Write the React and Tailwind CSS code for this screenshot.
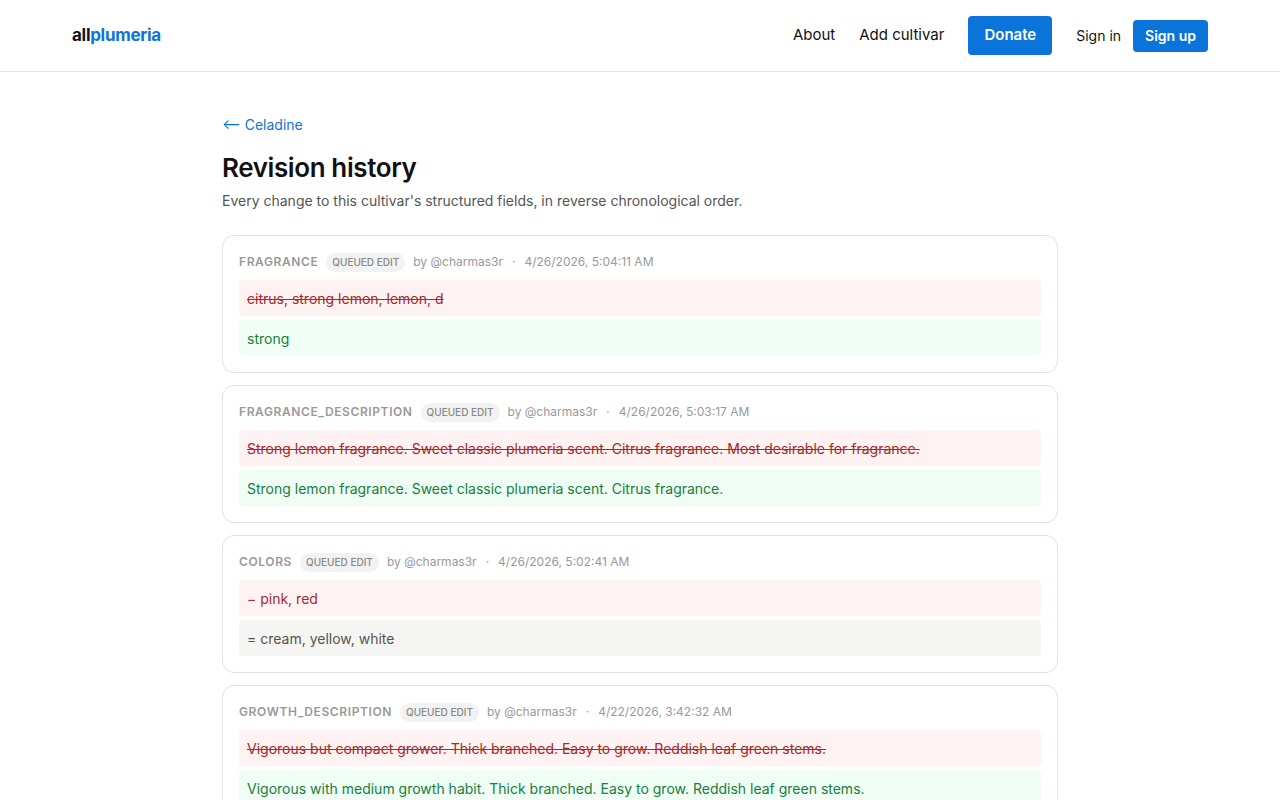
import React from "react";

const entries = [
  { field: "FRAGRANCE", date: "4/26/2026, 5:04:11 AM", rows: [["del", "citrus, strong lemon, lemon, d"], ["add", "strong"]] },
  { field: "FRAGRANCE_DESCRIPTION", date: "4/26/2026, 5:03:17 AM", rows: [["del", "Strong lemon fragrance. Sweet classic plumeria scent. Citrus fragrance. Most desirable for fragrance."], ["add", "Strong lemon fragrance. Sweet classic plumeria scent. Citrus fragrance."]] },
  { field: "COLORS", date: "4/26/2026, 5:02:41 AM", rows: [["minus", "− pink, red"], ["eq", "= cream, yellow, white"]] },
  { field: "GROWTH_DESCRIPTION", date: "4/22/2026, 3:42:32 AM", rows: [["del", "Vigorous but compact grower. Thick branched. Easy to grow. Reddish leaf green stems."], ["add", "Vigorous with medium growth habit. Thick branched. Easy to grow. Reddish leaf green stems."]] },
];

const rowCls = {
  del: "bg-[#fef2f2] text-[#a52a2a] line-through",
  add: "bg-[#f0fdf4] text-[#15803d]",
  minus: "bg-[#fef2f2] text-[#a52a2a]",
  eq: "bg-[#f5f5f4] text-[#57534e]",
};

export default function App() {
  return (
    <div className="min-h-screen bg-white text-[#111] font-[Inter,sans-serif]">
      <header className="h-[72px] border-b border-[#e5e5e5] flex items-center justify-between px-[72px]">
        <div className="text-[17px] font-bold tracking-[-0.3px]"><span className="text-[#111]">all</span><span className="text-[#0a74da]">plumeria</span></div>
        <nav className="flex items-center text-[15px]">
          <a className="mr-6">About</a>
          <a className="mr-6">Add cultivar</a>
          <span className="bg-[#0a74da] text-white font-semibold rounded px-4 h-[39px] flex items-center">Donate</span>
          <a className="ml-6 text-[14px]">Sign in</a>
          <span className="ml-3 bg-[#0a74da] text-white font-semibold rounded text-[14px] px-3 h-[32px] flex items-center">Sign up</span>
        </nav>
      </header>
      <main className="w-[836px] mx-auto pt-[43px]">
        <div className="text-[#0a74da] text-[14px] leading-5">⟵ Celadine</div>
        <h1 className="text-[26px] font-semibold mt-[17px] tracking-[-0.4px] leading-8">Revision history</h1>
        <p className="text-[14px] leading-5 text-[#555] mt-[7px]">Every change to this cultivar's structured fields, in reverse chronological order.</p>
        <div className="mt-[24px] flex flex-col gap-3">
          {entries.map((e) => (
            <div key={e.field} className="border border-[#e2e2e2] rounded-xl px-4 pt-[14px] pb-4">
              <div className="flex items-center text-[12px] text-[#999] h-[24px]">
                <span className="font-semibold tracking-[0.6px]">{e.field}</span>
                <span className="ml-2 bg-[#f2f2f2] rounded-full px-[6px] py-[2px] text-[10px] font-medium text-[#888]">QUEUED EDIT</span>
                <span className="ml-2">by @charmas3r</span>
                <span className="mx-[9px]">·</span>
                <span>{e.date}</span>
              </div>
              <div className="mt-[6px] flex flex-col gap-1">
                {e.rows.map(([t, s], i) => (
                  <div key={i} className={`h-9 flex items-center px-2 rounded text-[14px] ${rowCls[t]}`}>{s}</div>
                ))}
              </div>
            </div>
          ))}
        </div>
      </main>
    </div>
  );
}
